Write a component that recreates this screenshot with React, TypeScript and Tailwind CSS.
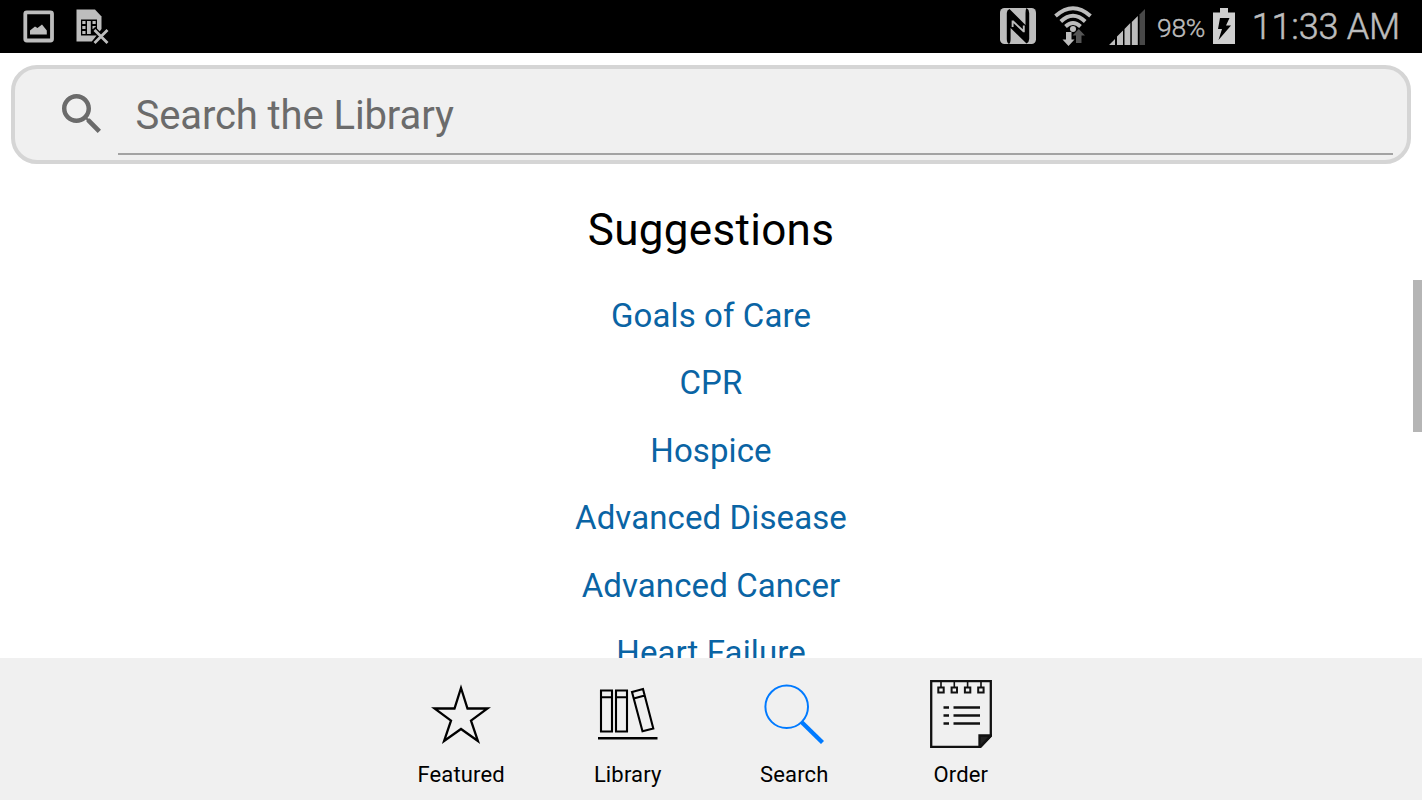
import type { ReactNode } from 'react';

const suggestions = [
  'Goals of Care',
  'CPR',
  'Hospice',
  'Advanced Disease',
  'Advanced Cancer',
  'Heart Failure',
];

function PictureIcon() {
  return (
    <svg width="32" height="34" viewBox="0 0 32 34">
      <rect x="2.300" y="2.300" width="26.700" height="28.200" rx="1.500" fill="none" stroke="#bdbdbd" strokeWidth="3.800" />
      <path d="M7 24.500V20.500L12 16.500L14.500 18L19 14.500L23.800 20.500V24.500Z" fill="#bdbdbd" />
    </svg>
  );
}

function SimIcon() {
  return (
    <svg width="33" height="36" viewBox="0 0 33 36">
      <path d="M.5 .5H19L25.500 7.500V20L16 32.500H.5Z" fill="#bdbdbd" />
      <path d="M5 10.500H21V26.500H5Z" fill="#000" />
      <path d="M6.300 12H9.500V15H6.300ZM6.300 17H9.500V20H6.300ZM6.300 22H9.500V25H6.300ZM11 12H14.800V25H11ZM16.500 12H19.700V15H16.500ZM16.500 17H19.700V20H16.500Z" fill="#bdbdbd" />
      <path d="M17.500 19.500L32 34.500M32 19.500L17.500 34.500" stroke="#000" strokeWidth="5" />
      <path d="M18.500 21L31.500 34M31.500 21L18.500 34" stroke="#bdbdbd" strokeWidth="2.800" />
    </svg>
  );
}

function NfcIcon() {
  return (
    <svg width="36" height="36" viewBox="0 0 36 36">
      <rect width="36" height="36" rx="4.500" fill="#bdbdbd" />
      <path d="M9 36Q6.800 35 6.800 31V5Q6.800 2 9.500 1L25.500 17V5Q25.500 1.500 26.500 0Q29.200 1.500 29.200 5V31Q29.200 34 26.500 35.500L10.600 20V31Q10.600 35 9 36Z" fill="#000" />
      <path d="M12.600 12.500V19M12.600 13L23.800 23.500M23.800 17.500V24.200" stroke="#bdbdbd" strokeWidth="1.900" fill="none" />
    </svg>
  );
}

function WifiIcon() {
  return (
    <svg width="38" height="42" viewBox="0 0 38 42">
      <g fill="none" stroke="#bdbdbd" strokeWidth="3.900">
        <path d="M1.500 10Q19 -5.500 36.500 10" />
        <path d="M6.800 15.500Q19 4 31.200 15.500" />
        <path d="M11.500 20.500Q19 13.500 26.500 20.500" />
      </g>
      <circle cx="19" cy="23" r="3" fill="#bdbdbd" />
      <path d="M12 26H17.500V33.500H20.500L14.500 40L8.500 33.500H12Z" fill="#bdbdbd" />
      <path d="M22 37V29.500H18.500L24.800 23L31 29.500H27.500V37Z" fill="#555" />
    </svg>
  );
}

function SignalIcon() {
  return (
    <svg width="36" height="36" viewBox="0 0 36 36">
      <path d="M0 36L6 30V36ZM8 36V27.500L14 21.500V36ZM15.500 36V20L21.300 14V36ZM22.800 36V13L28.800 7V36Z" fill="#bdbdbd" />
      <path d="M30.500 36V5.500L36 0V36Z" fill="#484848" />
    </svg>
  );
}

function BatteryIcon() {
  return (
    <svg width="22" height="36" viewBox="0 0 22 36">
      <path d="M7 0H15V4.500H22V36H0V4.500H7Z" fill="#cfcfcf" />
      <path d="M7 10H16.500L13 17.500H18L5.500 32L9 21H5Z" fill="#000" />
    </svg>
  );
}

function StarIcon() {
  return (
    <svg width="60" height="60" viewBox="0 0 60 60" fill="none" stroke="#000" strokeWidth="2.300">
      <path d="M30 4L36.500 24.500H56.500L40 36.600L46.900 57L30 45L13.100 57L20 36.600L3.500 24.500H23.500Z" />
    </svg>
  );
}

function BooksIcon() {
  return (
    <svg width="60" height="54" viewBox="0 0 60 54" fill="none" stroke="#000" strokeWidth="2.100">
      <path d="M3 3.500H14V44.500H3ZM3 10.200H14M18 3.500H29V44.500H18ZM18 10.200H29" />
      <path d="M34 5L45 2L55.300 41.500L44.500 44.300ZM35.700 11.500L46.700 8.500" />
      <path d="M0 51.300H59.500" strokeWidth="2.400" />
    </svg>
  );
}

function MagnifierIcon() {
  return (
    <svg width="60" height="60" viewBox="0 0 60 60" fill="none" stroke="#007aff">
      <circle cx="22.700" cy="22.800" r="21.300" strokeWidth="2" />
      <path d="M37.500 38L58.500 58.500" strokeWidth="4.300" />
    </svg>
  );
}

function NotepadIcon() {
  return (
    <svg width="62" height="68" viewBox="0 0 62 68" fill="none" stroke="#111" strokeWidth="2.300">
      <path d="M1.200 1.200H60.800V56L50.500 66.800H1.200Z" />
      <path d="M49.500 55.500H61L50 67H49.500Z" fill="#222" />
      <path d="M11 1V7M24.300 1V7M37.600 1V7M51 1V7" strokeWidth="1.600" />
      <path d="M8.300 7.500H13.700V12.500H8.300ZM21.600 7.500H27V12.500H21.600ZM34.900 7.500H40.300V12.500H34.900ZM48.200 7.500H53.600V12.500H48.200Z" strokeWidth="2" />
      <path d="M13.500 27.500H19M13.500 35.500H19M13.500 43.500H19M23.500 27.500H50M23.500 35.500H50M23.500 43.500H50" />
    </svg>
  );
}

function Tab({ label, children }: { label: string; children: ReactNode }) {
  return (
    <button className="flex w-[166.6px] flex-col items-center">
      <span className="flex h-[78px] items-center justify-center pt-2">{children}</span>
      <span className="mt-[11px] text-[22px] leading-[30px] tracking-[0.15px] text-black">{label}</span>
    </button>
  );
}

export default function App() {
  return (
    <div className="flex h-[800px] w-full flex-col overflow-hidden bg-white font-[Roboto,sans-serif]">
      {/* Status bar */}
      <header className="flex h-[53px] shrink-0 items-center justify-between bg-black pl-[23px] pr-[22px] text-[#bdbdbd]">
        <div className="flex items-center gap-[21px]">
          <PictureIcon />
          <SimIcon />
        </div>
        <div className="flex items-center whitespace-nowrap">
          <span className="-mt-0.5"><NfcIcon /></span>
          <span className="ml-[18px]"><WifiIcon /></span>
          <span className="ml-[17px]"><SignalIcon /></span>
          <span className="ml-3 w-[50px] pt-0.5 text-[26.5px] font-light tracking-[-0.3px] [-webkit-text-stroke:0.4px_#bdbdbd]">98%</span>
          <span className="ml-[6px] -mt-0.5"><BatteryIcon /></span>
          <span className="ml-4 flex w-[149px] justify-end text-[36px] font-light tracking-[-0.2px] [-webkit-text-stroke:0.5px_#bdbdbd]">11:33 AM</span>
        </div>
      </header>

      {/* Search field */}
      <div className="mx-[11px] mt-3 flex h-[99px] shrink-0 rounded-[26px] border-4 border-[#d5d5d5] bg-[#f0f0f0] pr-[14px]">
        <svg className="ml-[47px] mt-[25px] shrink-0" width="39" height="39" viewBox="3 3 17.490 17.490" fill="#6b6b6b">
          <path d="M15.500 14h-.79l-.28-.27C15.410 12.590 16 11.110 16 9.500 16 5.910 13.090 3 9.500 3S3 5.910 3 9.500 5.910 16 9.500 16c1.610 0 3.090-.59 4.230-1.570l.27.280v.79l5 4.990L20.490 19l-4.990-5zm-6 0C7.010 14 5 11.990 5 9.500S7.010 5 9.500 5 14 7.010 14 9.500 11.990 14 9.500 14z" />
        </svg>
        <div className="ml-[17px] flex h-[86px] flex-1 items-center border-b-2 border-[#a3a3a3] pl-[17.5px] pt-[10px] text-[40px] tracking-[-0.1px] text-[#6b6b6b]">
          Search the Library
        </div>
      </div>

      {/* Suggestions */}
      <main className="relative min-h-0 flex-1 overflow-hidden text-center">
        <h1 className="mt-9 text-[44px] leading-[60px] tracking-[0.3px] text-black">Suggestions</h1>
        <ul className="mt-[21.5px] text-[33px] tracking-[0.1px] text-[#0a64a4]">
          {suggestions.map((name) => (
            <li key={name} className="h-[67.5px] leading-[67.5px]">{name}</li>
          ))}
        </ul>
        <div className="absolute right-0 top-[116px] h-[152px] w-[9px] bg-[#b5b5b5]" />
      </main>

      {/* Tab bar */}
      <nav className="flex h-[142px] shrink-0 items-start justify-center bg-[#f0f0f0] pt-[13px]">
        <Tab label="Featured"><StarIcon /></Tab>
        <Tab label="Library"><BooksIcon /></Tab>
        <Tab label="Search"><MagnifierIcon /></Tab>
        <Tab label="Order"><NotepadIcon /></Tab>
      </nav>
    </div>
  );
}
